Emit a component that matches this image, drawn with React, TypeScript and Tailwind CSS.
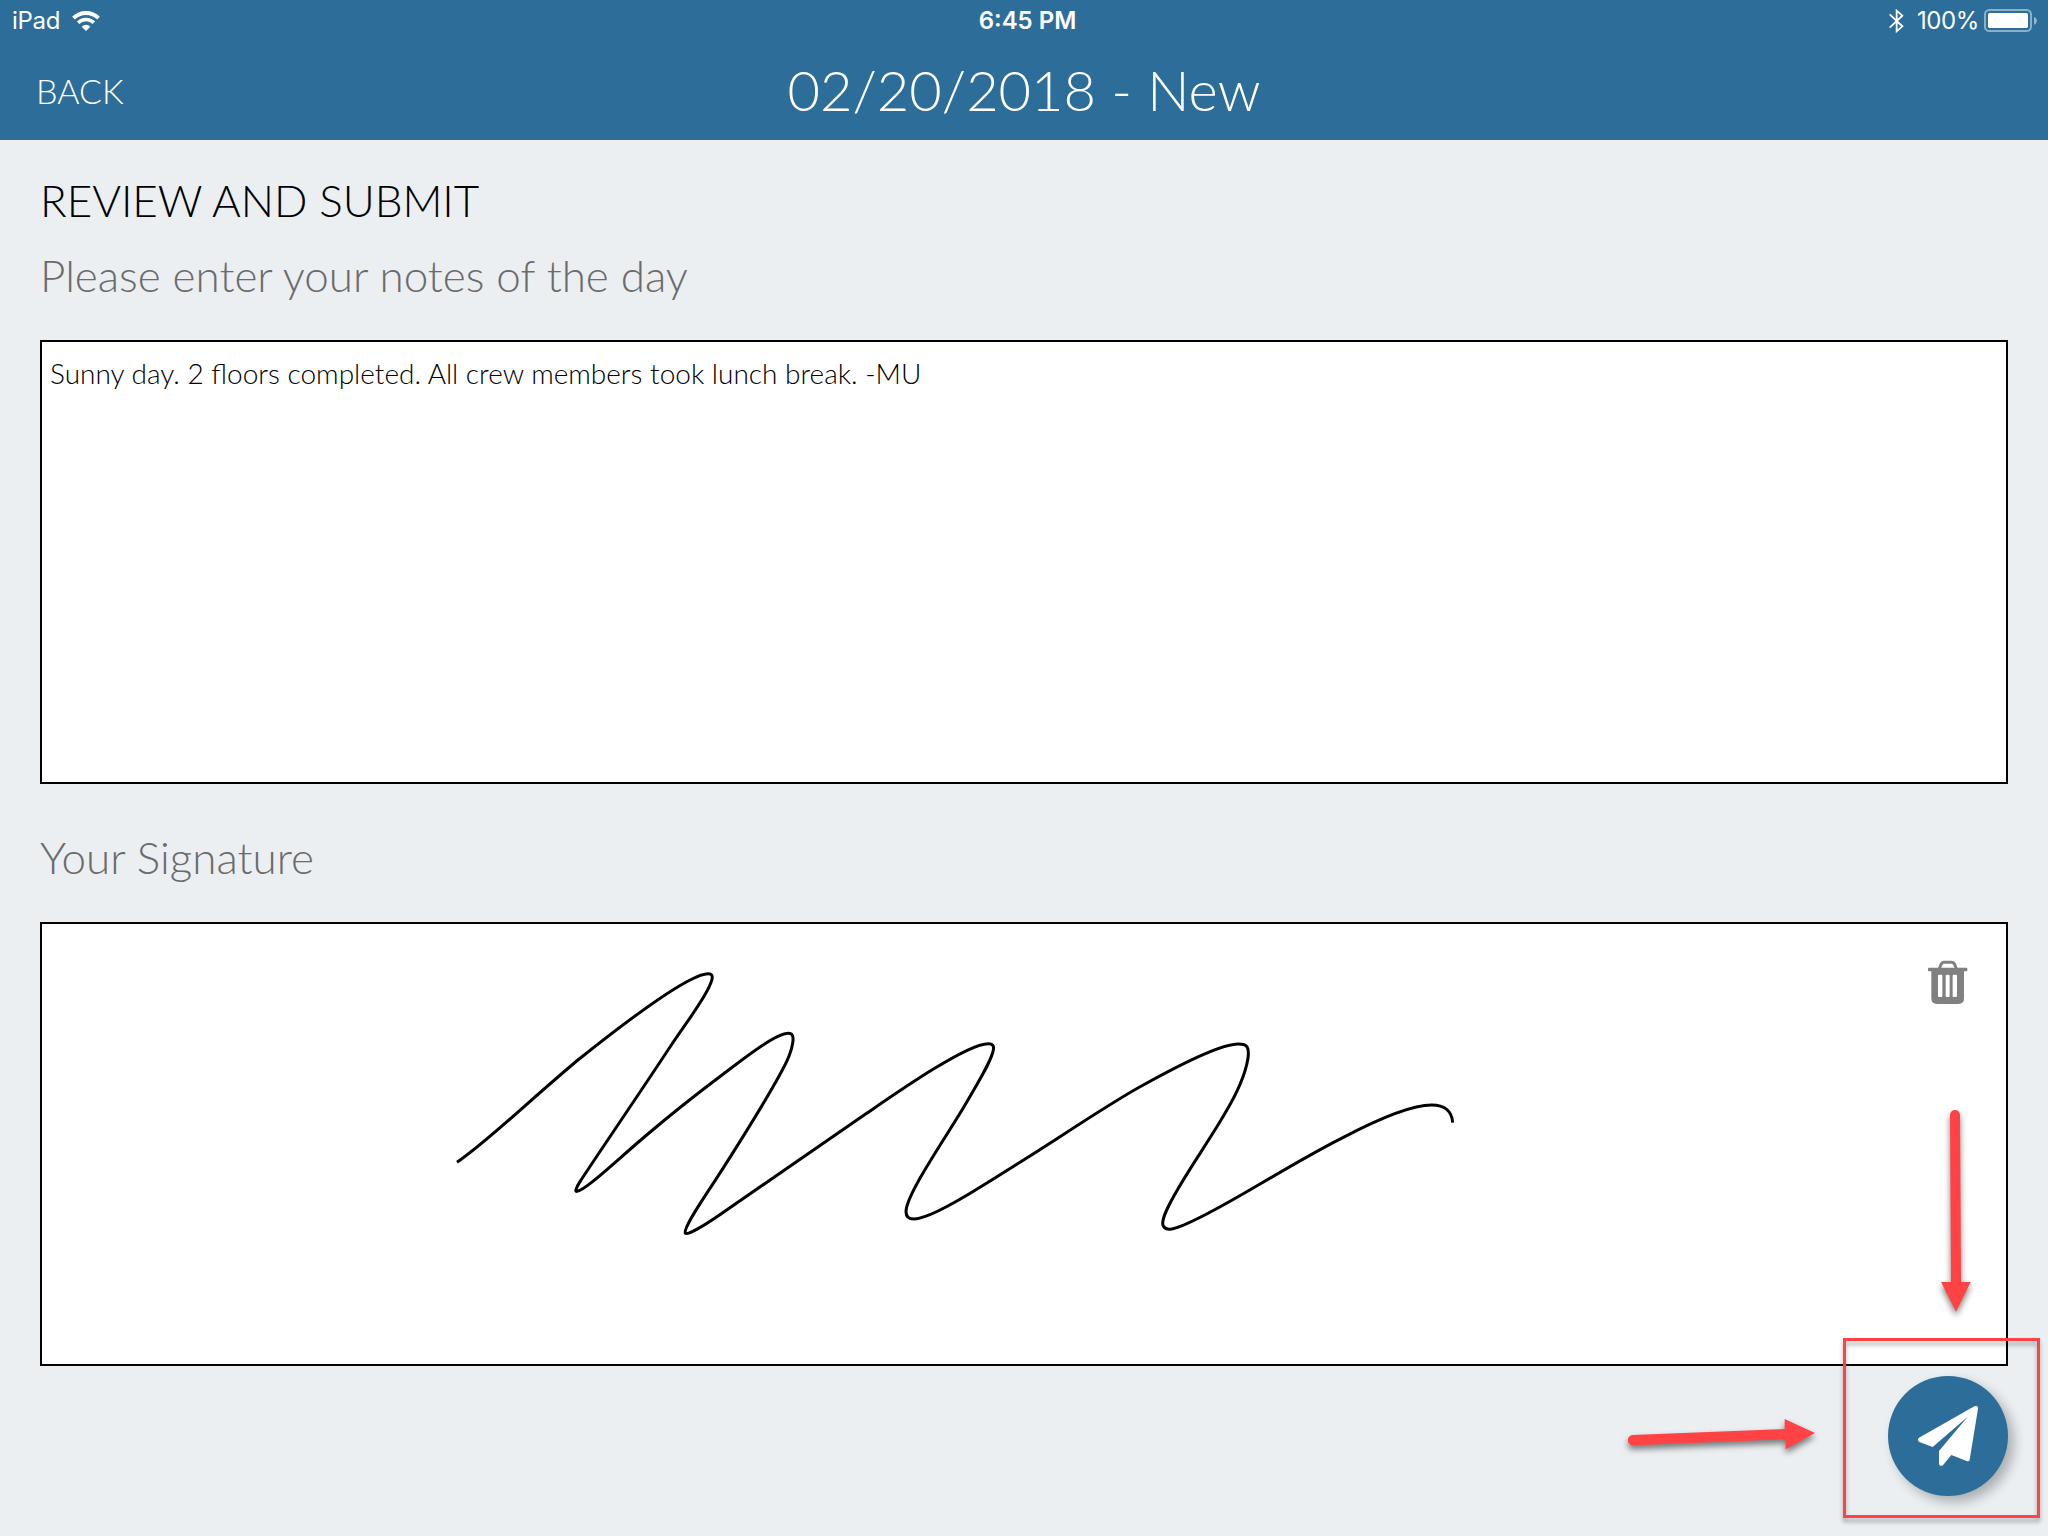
import React from "react";

function WifiIcon() {
  return (
    <svg className="h-[22px] w-7" viewBox="219 27 84 66" fill="none" stroke="white">
      <path d="M223.5 51.5A53 53 0 0 1 298.5 51.5" strokeWidth="12" />
      <path d="M237.3 65.3A33.5 33.5 0 0 1 284.7 65.3" strokeWidth="11" />
      <path d="M261 90L248 77A18.4 18.4 0 0 1 274 77Z" fill="white" stroke="none" />
    </svg>
  );
}

function BluetoothIcon() {
  return (
    <svg className="h-[26px] w-[15px]" viewBox="64 21 45 78" fill="none" stroke="white" strokeWidth="5.5">
      <path d="M66 40L104 76L87 91V29L104 44L66 80" />
    </svg>
  );
}

function BatteryIcon() {
  return (
    <svg className="h-[23px] w-[53px]" viewBox="348 27 159 69" fill="none">
      <rect x="351" y="30" width="138" height="63" rx="13" stroke="white" strokeOpacity="0.45" strokeWidth="6" />
      <rect x="360" y="39" width="120" height="45" rx="5" fill="white" />
      <path d="M498 50Q507 54 507 62Q507 70 498 75Z" fill="white" fillOpacity="0.5" />
    </svg>
  );
}

function TrashIcon() {
  return (
    <svg className="h-[45px] w-10" viewBox="84 90 120 135" fill="none">
      <path d="M118 116L123 103Q126 96.500 133 96.500H154Q161 96.500 164 103L169 116" stroke="#808080" strokeWidth="9" />
      <rect x="84" y="113" width="118" height="11" rx="3" fill="#808080" />
      <path
        fillRule="evenodd"
        fill="#808080"
        d="M94 120H192V205Q192 222 175 222H111Q94 222 94 205ZM117 134Q114 134 114 137V198Q114 201 117 201H124Q127 201 127 198V137Q127 134 124 134ZM140 134Q137 134 137 137V198Q137 201 140 201H146Q149 201 149 198V137Q149 134 146 134ZM161 134Q158 134 158 137V198Q158 201 161 201H168Q171 201 171 198V137Q171 134 168 134Z"
      />
    </svg>
  );
}

function PlaneIcon() {
  return (
    <svg className="size-[120px]" viewBox="204 168 360 360" fill="white">
      <path d="M297 353L463 259Q475 255 474 266L449 419Q447 426 440 423L394 405L370 434Q366 439 360 437Q357 435 357 430V393L443 290L338 381L298 366Q290 359 297 353Z" />
    </svg>
  );
}

function Signature() {
  return (
    <svg className="h-full w-full" viewBox="-1194 -78 5892 1320" fill="none" stroke="black" strokeWidth="9">
      <path
        d="M51 637C150 568 230 485 410 333C520 245 740 71 805 71C818 71 820 82 812 100
        C795 147 740 215 690 291C600 428 455 640 420 695C408 714 404 726 411 724
        C440 718 520 640 620 555C700 487 770 432 850 372C900 335 1005 250 1045 250C1056 250 1062 256 1058 280
        C1052 318 1030 355 1005 400C960 480 860 640 800 730C770 776 730 838 736 850
        C740 857 785 833 860 780C980 697 1200 545 1280 490C1370 428 1580 281 1645 281C1660 281 1664 290 1658 308
        C1645 350 1610 405 1560 490C1515 565 1398 735 1398 785C1398 800 1406 807 1422 807
        C1455 807 1530 768 1620 712C1700 662 1780 612 1860 560C1960 495 2050 437 2110 405
        C2200 355 2340 282 2395 282C2422 282 2428 290 2424 325C2416 375 2385 440 2355 490
        C2315 560 2255 645 2215 715C2190 758 2160 810 2170 828C2174 836 2182 839 2195 837
        C2235 830 2370 755 2460 702C2540 655 2640 597 2710 562C2800 515 2910 465 2975 465C3015 465 3036 485 3038 518"
      />
    </svg>
  );
}

function Arrows() {
  return (
    <svg
      className="absolute right-0 bottom-0 h-[446px] w-[448px] [filter:drop-shadow(0_4px_3px_rgba(0,0,0,0.5))]"
      viewBox="0 0 1344 1338"
      fill="#ff4244"
    >
      <path d="M1050 75A15 15 0 0 1 1080 75L1083 576H1112L1068 665L1023 576H1053Z" />
      <path d="M98 1035L554 1017V987L645 1029L557 1078V1048L100 1066A15 15 0 0 1 98 1035Z" />
    </svg>
  );
}

export default function App() {
  return (
    <div className="relative flex h-[1536px] w-[2048px] flex-col overflow-hidden bg-[#ebeff2] font-['Lato',sans-serif] font-light">
      <header className="h-[140px] bg-[#2d6d9a] text-white">
        <div className="grid h-10 grid-cols-[1fr_auto_1fr] items-center pt-px font-['Inter',sans-serif] text-2xl font-normal">
          <div className="flex items-center gap-3 pl-3">
            <span className="tracking-[-0.3px]">iPad</span>
            <WifiIcon />
          </div>
          <span className="pl-[7px] text-center font-semibold">6:45 PM</span>
          <div className="flex items-center justify-end pr-[11px]">
            <BluetoothIcon />
            <span className="mr-[5px] ml-[13px] tracking-[-0.4px]">100%</span>
            <BatteryIcon />
          </div>
        </div>
        <div className="grid h-[100px] grid-cols-[1fr_auto_1fr] items-start">
          <button className="mt-[31px] ml-9 justify-self-start text-[34px] leading-10">BACK</button>
          <h1 className="mt-5 text-[56px] leading-[60px]">02/20/2018 - New</h1>
        </div>
      </header>

      <main className="flex flex-col px-10 pt-[30px]">
        <h2 className="h-[75px] text-[44px] leading-[60px] tracking-[-0.05px] text-black">REVIEW AND SUBMIT</h2>
        <p className="h-[95px] text-[44px] leading-[60px] tracking-[-0.02px] text-[#6b6b6b]">
          Please enter your notes of the day
        </p>
        <div className="h-[444px] border-2 border-black bg-white px-2 pt-[13px] text-[28px] leading-9 text-black">
          Sunny day. 2 floors completed. All crew members took lunch break. -MU
        </div>
        <p className="mt-[43px] h-[95px] text-[44px] leading-[60px] text-[#6b6b6b]">Your Signature</p>
        <div className="relative h-[444px] border-2 border-black bg-white">
          <Signature />
          <button className="absolute top-9 right-[38px]">
            <TrashIcon />
          </button>
        </div>
      </main>

      <button className="absolute right-10 bottom-10 size-[120px] rounded-full bg-[#2d6d9a] shadow-[6px_6px_12px_rgba(0,0,0,0.27)]">
        <PlaneIcon />
      </button>
      <div className="absolute right-2 bottom-[18px] h-[180px] w-[197px] border-3 border-[#ff4244] [filter:drop-shadow(0_4px_2px_rgba(0,0,0,0.3))]" />
      <Arrows />
    </div>
  );
}
